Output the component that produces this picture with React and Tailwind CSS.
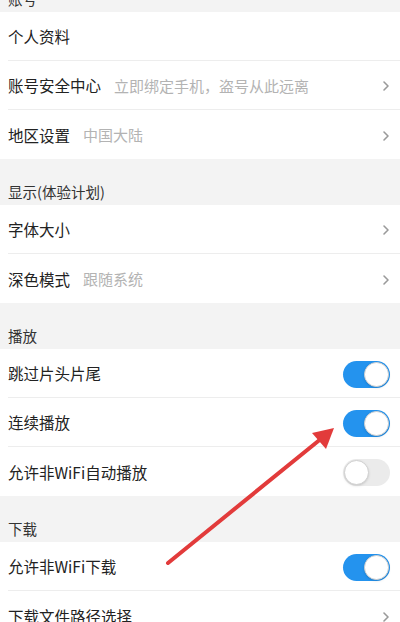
import React from 'react';

const sections = [
  {
    title: '账号',
    first: true,
    rows: [
      { label: '个人资料' },
      { label: '账号安全中心', sub: '立即绑定手机，盗号从此远离', arrow: true },
      { label: '地区设置', sub: '中国大陆', arrow: true },
    ],
  },
  {
    title: '显示(体验计划)',
    rows: [
      { label: '字体大小', arrow: true },
      { label: '深色模式', sub: '跟随系统', arrow: true },
    ],
  },
  {
    title: '播放',
    rows: [
      { label: '跳过片头片尾', toggle: true, on: true },
      { label: '连续播放', toggle: true, on: true },
      { label: '允许非WiFi自动播放', toggle: true, on: false },
    ],
  },
  {
    title: '下载',
    rows: [
      { label: '允许非WiFi下载', toggle: true, on: true },
      { label: '下载文件路径选择', arrow: true },
    ],
  },
];

function Toggle({ on }) {
  return (
    <div
      className={`w-[47px] h-[27px] rounded-full flex items-center p-[1px] ${
        on ? 'bg-[#2493ee] justify-end' : 'bg-[#ebebeb] justify-start'
      }`}
    >
      <div className="w-[25px] h-[25px] rounded-full bg-white border border-[#d0d0d0] shadow-sm" />
    </div>
  );
}

function Chevron() {
  return (
    <svg width="8" height="12" viewBox="0 0 8 12">
      <path d="M2 2l4 4-4 4" fill="none" stroke="#9a9a9a" strokeWidth="1.6" strokeLinecap="round" strokeLinejoin="round" />
    </svg>
  );
}

function Row({ row, last }) {
  return (
    <div className="bg-white pl-2">
      <div className={`h-[49px] flex items-center pr-[10px] pt-[2px] ${last ? '' : 'border-b border-[#ededed]'}`}>
        <span className="text-[15.5px] text-[#222]">{row.label}</span>
        {row.sub && <span className="ml-[13px] text-[15px] text-[#b3b3b3]">{row.sub}</span>}
        <div className="ml-auto flex items-center">
          {row.arrow && <Chevron />}
          {row.toggle && <Toggle on={row.on} />}
        </div>
      </div>
    </div>
  );
}

export default function App() {
  return (
    <div
      className="relative w-[400px] h-[622px] overflow-hidden bg-[#f3f3f3]"
      style={{ fontFamily: '"Noto Sans CJK SC", "Noto Sans", sans-serif' }}
    >
      {sections.map((s) => (
        <div key={s.title}>
          <div className={`h-[46px] flex items-end pl-2 pb-[2px] ${s.first ? '-mt-[34px]' : ''}`}>
            <span className="text-[14.5px] text-[#333]">{s.title}</span>
          </div>
          {s.rows.map((r, i) => (
            <Row key={r.label} row={r} last={i === s.rows.length - 1} />
          ))}
        </div>
      ))}
      <svg className="absolute left-0 top-0 pointer-events-none" width="400" height="622">
        <line x1="168" y1="563" x2="322" y2="438" stroke="#e23b3b" strokeWidth="4" strokeLinecap="round" />
        <polygon points="334,428 312,433 326,449" fill="#e23b3b" />
      </svg>
    </div>
  );
}
